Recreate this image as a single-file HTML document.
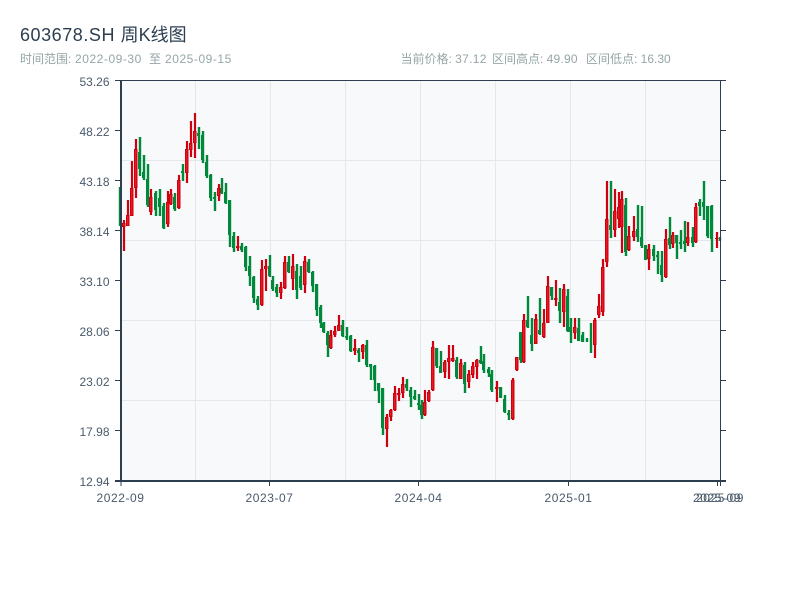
<!DOCTYPE html>
<html lang="zh">
<head>
<meta charset="utf-8">
<title>603678.SH 周K线图</title>
<style>
html,body{margin:0;padding:0;background:#fff;width:800px;height:600px;overflow:hidden}
svg{display:block;font-family:"Liberation Sans","Noto Sans CJK SC",sans-serif}
</style>
</head>
<body>
<svg width="800" height="600" viewBox="0 0 800 600" xmlns="http://www.w3.org/2000/svg">
<rect width="800" height="600" fill="#fff"/>
<text x="20" y="41" font-size="18" fill="#2c3e50"><tspan letter-spacing=".55">603678.SH </tspan>周K线图</text>
<text x="20" y="63" font-size="12" fill="#95a5a6">时间范围:</text>
<text x="75" y="63" font-size="12" fill="#95a5a6" letter-spacing=".55">2022-09-30</text>
<text x="149" y="63" font-size="12" fill="#95a5a6">至</text>
<text x="165" y="63" font-size="12" fill="#95a5a6" letter-spacing=".55">2025-09-15</text>
<text x="400.500" y="63" font-size="12" fill="#95a5a6">当前价格: <tspan letter-spacing=".3">37.12</tspan></text>
<text x="492" y="63" font-size="12" fill="#95a5a6">区间高点: <tspan letter-spacing=".2">49.90</tspan></text>
<text x="586" y="63" font-size="12" fill="#95a5a6">区间低点: 16.30</text>

<rect x="121" y="81" width="599" height="400" fill="#f8f9fb"/>
<path d="M121 160.500H720M121 240.500H720M121 320.500H720M121 400.500H720M195.500 81V481M270.500 81V481M345.500 81V481M420.500 81V481M495.500 81V481M570.500 81V481M645.500 81V481" stroke="#e4e7ec" stroke-width="1" fill="none"/>

<path fill="none" stroke="#00893a" stroke-width="2.400" d="M120 187V226M140 137V176M144 155V180M148 164V207M156 191V216M160 189V216M164 203V229M175 193V211M183 164V181M199 127V149M203 131V163M207 155V178M211 174V201M215 192V211M222 178V194M226 183V204M230 200V247M234 232V252M242 243V252M246 246V271M250 256V286M254 276V303M258 296V310M270 255V277M273 276V291M277 284V297M289 256V273M297 264V299M301 266V290M309 259V273M313 271V292M317 284V316M321 305V328M324 322V333M328 331V357M343 320V337M347 327V340M351 335V352M359 348V362M367 340V367M371 364V380M375 365V391M379 383V403M383 388V435M407 379V391M411 387V407M415 390V400M419 394V410M422 400V419M437 348V368M441 351V373M457 357V379M465 362V393M481 346V364M484 354V373M489 367V377M492 370V392M501 387V398M505 395V413M509 410V420M521 332V363M528 296V328M532 318V351M540 298V335M552 287V300M560 288V323M568 289V332M571 318V343M579 318V341M583 332V342M587 338V342M591 323V353M611 181V238M626 198V256M638 205V242M642 206V248M646 245V260M654 245V261M658 251V274M662 251V282M670 217V249M677 235V259M681 230V249M685 221V252M693 227V247M700 199V216M704 181V220M708 206V238M712 205V252M720 237V241"/>
<path fill="none" stroke="#00893a" stroke-width="3" transform="translate(-.5 0)" d="M140 152V169M144 172V178M148 179V205M156 193V210M160 198V207M164 206V228M175 197V209M183 171V173M199 133V136M203 135V160M207 162V176M211 175V198M215 197V199M222 188V193M226 192V203M230 200V235M234 236V248M242 246V250M246 247V267M250 266V276M254 277V298M258 299V305M270 266V276M273 280V289M277 287V293M289 262V272M297 271V290M301 276V288M309 262V272M313 272V286M317 284V310M321 307V323M324 323V332M328 333V345M343 325V336M347 336V338M351 336V351M359 350V353M367 345V365M371 364V367M375 366V380M379 383V391M383 388V428M407 384V388M411 390V397M415 396V399M419 403V405M422 405V415M437 348V366M441 366V373M457 360V377M465 365V384M481 360V363M484 361V370M489 369V373M492 374V390M501 387V398M505 399V412M509 413V415M521 332V360M528 320V327M532 335V344M540 330V334M552 287V296M560 302V311M568 296V331M571 327V332M579 328V341M583 335V342M611 225V230M626 205V252M638 229V237M642 237V246M646 245V260M654 249V256M658 255V257M662 265V275M670 238V245M677 235V243M681 242V244M685 241V244M693 237V243M700 202V206M704 202V207M708 206V236M712 206V239"/>

<path fill="none" stroke="#cf0010" stroke-width="2.200" d="M124 220V251M128 200V226M132 161V216M136 139V198M151 189V215M168 191V227M171 189V205M179 175V209M187 141V183M191 121V157M195 113V158M219 184V201M238 236V251M262 260V306M266 259V291M281 282V299M285 256V289M293 254V290M305 256V293M331 330V349M335 326V337M339 315V331M355 339V355M363 344V359M387 414V447M391 409V421M395 386V411M399 388V401M403 377V398M425 390V416M429 390V402M433 341V391M445 360V378M449 345V379M453 345V362M461 359V379M469 370V388M473 362V378M477 359V379M497 381V402M513 378V420M517 357V371M524 314V363M536 314V344M544 309V338M548 276V323M556 280V306M564 284V327M575 318V339M595 318V358M599 294V318M603 259V316M607 181V267M615 189V237M619 192V228M622 191V253M629 226V251M634 216V241M649 244V270M666 229V278M673 232V248M688 222V246M696 203V243M717 232V248"/>
<path fill="none" stroke="#cf0010" stroke-width="3.500" transform="translate(-.25 0)" d="M124 223V227M128 215V226M132 188V216M136 149V188M151 197V212M168 202V224M171 194V204M179 180V208M187 149V173M191 143V150M195 131V143M219 188V196M238 246V248M262 269V305M266 266V269M281 287V293M285 262V288M293 266V279M305 261V285M331 335V348M335 331V335M339 325V331M355 348V351M363 345V352M387 417V429M391 410V417M395 393V410M399 393V395M403 384V393M425 402V415M429 392V401M433 347V390M445 362V372M449 358V362M453 358V361M461 363V379M469 374V382M473 366V375M477 360V367M497 387V389M513 380V419M517 357V370M524 320V362M536 319V344M544 323V337M548 286V323M556 298V300M564 289V312M575 327V333M595 320V345M599 306V315M603 267V312M607 219V262M615 211V230M619 207V219M622 199V227M629 236V250M634 231V237M649 249V259M666 239V277M673 235V244M688 237V243M696 207V242M717 238V239"/>
<path fill="none" stroke="#ee2026" stroke-width="1" transform="translate(-.25 0)" d="M124 224V226M128 216V225M132 189V215M136 150V187M151 198V211M168 203V223M171 195V203M179 181V207M187 150V172M191 144V149M195 132V142M219 189V195M262 270V304M266 267V268M281 288V292M285 263V287M293 267V278M305 262V284M331 336V347M335 332V334M339 326V330M363 346V351M387 418V428M391 411V416M395 394V409M403 385V392M425 403V414M429 393V400M433 348V389M445 363V371M449 359V361M453 359V360M461 364V378M469 375V381M473 367V374M477 361V366M513 381V418M517 358V369M524 321V361M536 320V343M544 324V336M548 287V322M564 290V311M575 328V332M595 321V344M599 307V314M603 268V311M607 220V261M615 212V229M619 208V218M622 200V226M629 237V249M634 232V236M649 250V258M666 240V276M673 236V243M688 238V242M696 208V241"/>

<g stroke="#2c3e50" fill="none">
<path stroke-width="1" d="M115 80.500H726M720.500 81V481"/>
<path stroke-width="2" d="M121 81V481M115 481H726"/>
<path stroke-width="1" d="M115 130.500H120M115 180.500H120M115 230.500H120M115 280.500H120M115 330.500H120M115 380.500H120M115 430.500H120M721 130.500H726M721 180.500H726M721 230.500H726M721 280.500H726M721 330.500H726M721 380.500H726M721 430.500H726M121 482V486M269.500 482V486M418.500 482V486M568.500 482V486M717.500 482V486M720.500 482V486"/>
</g>

<g font-size="12" fill="#4a5a6b" text-anchor="end">
<text x="109.500" y="86">53.26</text>
<text x="109.500" y="136">48.22</text>
<text x="109.500" y="186">43.18</text>
<text x="109.500" y="236">38.14</text>
<text x="109.500" y="286">33.10</text>
<text x="109.500" y="336">28.06</text>
<text x="109.500" y="386">23.02</text>
<text x="109.500" y="436">17.98</text>
<text x="109.500" y="486">12.94</text>
</g>
<g font-size="12" fill="#4a5a6b" text-anchor="middle" letter-spacing=".55">
<text x="120.500" y="502">2022-09</text>
<text x="269.500" y="502">2023-07</text>
<text x="418.500" y="502">2024-04</text>
<text x="568.500" y="502">2025-01</text>
<text x="717" y="502">2025-09</text>
<text x="720" y="502">2025-09</text>
</g>
</svg>
</body>
</html>
